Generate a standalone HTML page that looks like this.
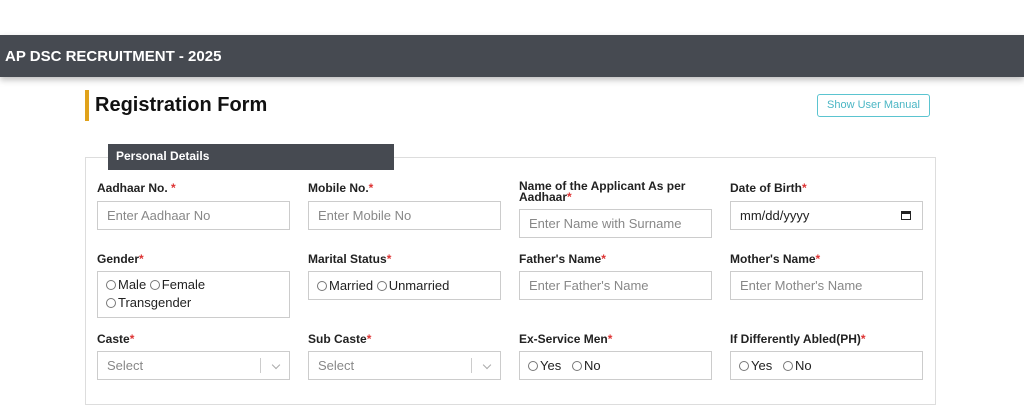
<!DOCTYPE html>
<html><head><style>
*{box-sizing:border-box;margin:0;padding:0}
body{width:1024px;height:405px;background:#fff;font-family:"Liberation Sans",sans-serif;position:relative;overflow:hidden}
.a{position:absolute}
.hdr{left:0;top:35px;width:1024px;height:42px;background:#464a51;color:#fff;font-weight:bold;font-size:15px;line-height:43px;padding-left:5px;box-shadow:0 3px 6px rgba(0,0,0,.25)}
.bar{left:85px;top:90px;width:4px;height:31px;background:#e0a21b}
.title{left:95px;top:94px;font-size:20px;font-weight:bold;color:#111}
.btn{left:817px;top:94px;width:113px;height:23px;border:1px solid #5bc4d0;border-radius:3px;color:#4bb6c4;font-size:11px;line-height:21px;text-align:center}
.fs{left:85px;top:157px;width:851px;height:248px;border:1px solid #ddd}
.lg{left:108px;top:144px;width:286px;height:26px;background:#464a51;color:#fff;font-weight:bold;font-size:12px;line-height:25px;padding-left:8px}
.l{font-size:12px;color:#222;font-weight:bold;line-height:11px}
.l b{color:#d33}
.i{border:1px solid #ccc;height:29px;font-size:13px;color:#888;line-height:27px;padding-left:9px;width:193px;background:#fff}
.r{color:#222;font-size:13px}
.c{display:inline-block;width:10px;height:10px;border:1px solid #777;border-radius:50%;vertical-align:-1px;margin-right:2px}
.sel .s{position:absolute;right:28px;top:6px;height:15px;border-left:1px solid #ccc}
.sel .v{position:absolute;right:10px;top:10px;width:6px;height:6px;border-right:1px solid #aaa;border-bottom:1px solid #aaa;transform:rotate(45deg)}
</style></head><body>
<div class="a hdr">AP DSC RECRUITMENT - 2025</div>
<div class="a bar"></div>
<div class="a title">Registration Form</div>
<div class="a btn">Show User Manual</div>
<div class="a fs"></div>
<div class="a lg">Personal Details</div>

<div class="a l" style="left:97px;top:183px">Aadhaar No. <b>*</b></div>
<div class="a i" style="left:97px;top:201px">Enter Aadhaar No</div>
<div class="a l" style="left:308px;top:183px">Mobile No.<b>*</b></div>
<div class="a i" style="left:308px;top:201px">Enter Mobile No</div>
<div class="a l" style="left:519px;top:181px;width:200px">Name of the Applicant As per Aadhaar<b>*</b></div>
<div class="a i" style="left:519px;top:209px">Enter Name with Surname</div>
<div class="a l" style="left:730px;top:183px">Date of Birth<b>*</b></div>
<div class="a i" style="left:730px;top:201px;color:#222">mm/dd/yyyy<span style="position:absolute;right:11px;top:9px;width:10px;height:9px;border:1.5px solid #222;border-top-width:3px"></span></div>

<div class="a l" style="left:97px;top:254px">Gender<b>*</b></div>
<div class="a i r" style="left:97px;top:271px;height:47px;padding-left:8px;line-height:18px;padding-top:4px"><span class="c"></span>Male <span class="c"></span>Female<br><span class="c"></span>Transgender</div>
<div class="a l" style="left:308px;top:254px">Marital Status<b>*</b></div>
<div class="a i r" style="left:308px;top:271px;padding-left:8px"><span class="c"></span>Married <span class="c"></span>Unmarried</div>
<div class="a l" style="left:519px;top:254px">Father's Name<b>*</b></div>
<div class="a i" style="left:519px;top:271px">Enter Father's Name</div>
<div class="a l" style="left:730px;top:254px">Mother's Name<b>*</b></div>
<div class="a i" style="left:730px;top:271px">Enter Mother's Name</div>

<div class="a l" style="left:97px;top:334px">Caste<b>*</b></div>
<div class="a i sel" style="left:97px;top:351px">Select<span class="s"></span><span class="v"></span></div>
<div class="a l" style="left:308px;top:334px">Sub Caste<b>*</b></div>
<div class="a i sel" style="left:308px;top:351px">Select<span class="s"></span><span class="v"></span></div>
<div class="a l" style="left:519px;top:334px">Ex-Service Men<b>*</b></div>
<div class="a i r" style="left:519px;top:351px;padding-left:8px"><span class="c"></span>Yes &nbsp;&nbsp;<span class="c"></span>No</div>
<div class="a l" style="left:730px;top:334px">If Differently Abled(PH)<b>*</b></div>
<div class="a i r" style="left:730px;top:351px;padding-left:8px"><span class="c"></span>Yes &nbsp;&nbsp;<span class="c"></span>No</div>
</body></html>
